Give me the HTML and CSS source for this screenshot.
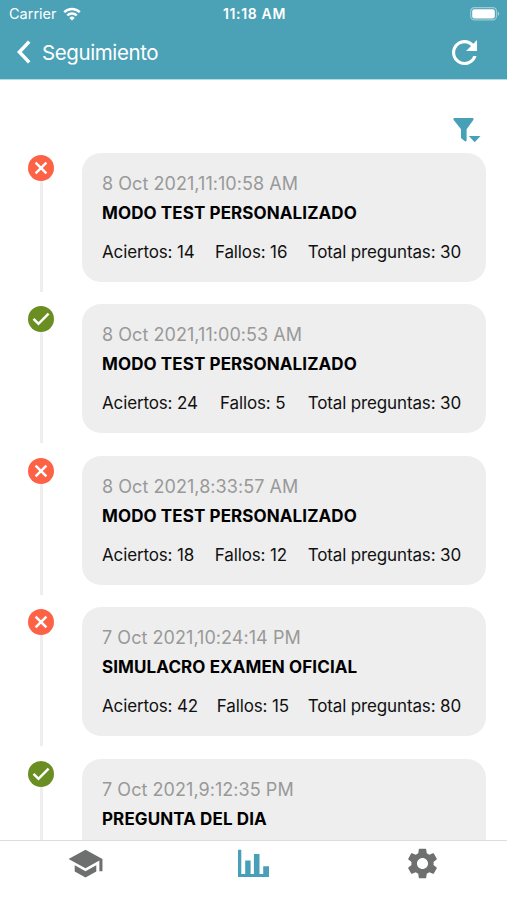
FILE: index.html
```html
<!DOCTYPE html>
<html lang="es">
  <head>
    <meta charset="UTF-8" />
    <meta name="viewport" content="width=device-width, initial-scale=1.0" />
    <title>Seguimiento</title>
    <link rel="stylesheet" href="styles.css">
  </head>
  <body>
    <svg class="symbols" aria-hidden="true">
      <symbol id="icon-fail" viewBox="0 0 26 26">
        <circle cx="13" cy="13" r="13" fill="#fd6246" />
        <path d="M7.6 7.6l10.8 10.8M18.4 7.600l-10.800 10.800" fill="none" stroke="#fff" stroke-width="2.500" />
      </symbol>
      <symbol id="icon-ok" viewBox="0 0 26 26">
        <circle cx="13" cy="13" r="13" fill="#6b8e23" />
        <path d="M5.5 12.8l5 5L20.6 7.6" fill="none" stroke="#fff" stroke-width="2.5" />
      </symbol>
    </svg>

    <header class="header">
      <div class="status-bar">
        <div class="carrier">
          <span>Carrier</span>
          <svg class="wifi" viewBox="0 0 18 14">
            <path d="M1.2 5.2a11.2 11.2 0 0 1 15.6 0" fill="none" stroke="#fff" stroke-width="2.5" />
            <path d="M4.2 8.4a6.9 6.9 0 0 1 9.6 0" fill="none" stroke="#fff" stroke-width="2.4" />
            <path d="M9 13.6L6.3 10.9a3.9 3.9 0 0 1 5.4 0z" fill="#fff" />
          </svg>
        </div>
        <span class="time">11:18 AM</span>
        <svg class="battery" viewBox="0 0 30 14">
          <rect x=".7" y=".7" width="25.8" height="12.2" rx="3.6" fill="none" stroke="#fff" stroke-opacity=".45" stroke-width="1.2" />
          <rect x="2.2" y="2.2" width="22.6" height="9.2" rx="2.2" fill="#fff" />
          <path d="M27.8 4.6v4.4c1.9-.8 1.9-3.6 0-4.4z" fill="#fff" fill-opacity=".5" />
        </svg>
      </div>
      <div class="nav-bar">
        <svg class="back" viewBox="0 0 14 24">
          <path d="M12.2 1.6L2.4 12l9.800 10.400" fill="none" stroke="#fff" stroke-width="3.5" />
        </svg>
        <h1>Seguimiento</h1>
        <svg class="refresh" viewBox="80 80 352 352">
          <path d="M256 388c-72.6 0-132-59.4-132-132s59.4-132 132-132c36.3 0 69.3 15.4 92.4 39.6L278 234h154V80l-51.7 51.7C348.4 99.8 304.4 80 256 80c-96.8 0-176 79.200-176 176s78.100 176 176 176c81 0 148.300-54.100 169.400-128h-46.600C360.100 353.600 311.700 388 256 388z" fill="#fff" />
        </svg>
      </div>
    </header>

    <main class="content">
      <div class="toolbar">
        <svg class="filter" viewBox="0 0 28 25">
          <path d="M1.2 0h18.600q1.300.700.500 2L13.600 11.300v11.200q-.6 1.600-2 .6L8 20V11.300L.7 2Q-.1.700 1.200 0z" fill="#47a0b7" />
          <path d="M15.800 18h11.700l-5.850 6.300z" fill="#47a0b7" />
        </svg>
      </div>

      <div class="timeline">
        <div class="item">
          <div class="marker"><svg><use href="#icon-fail" /></svg></div>
          <div class="card">
            <p class="date">8 Oct 2021,11:10:58 AM</p>
            <h2>MODO TEST PERSONALIZADO</h2>
            <div class="stats"><span>Aciertos: 14</span><span>Fallos: 16</span><span>Total preguntas: 30</span></div>
          </div>
        </div>
        <div class="item">
          <div class="marker"><svg><use href="#icon-ok" /></svg></div>
          <div class="card">
            <p class="date">8 Oct 2021,11:00:53 AM</p>
            <h2>MODO TEST PERSONALIZADO</h2>
            <div class="stats"><span>Aciertos: 24</span><span>Fallos: 5</span><span>Total preguntas: 30</span></div>
          </div>
        </div>
        <div class="item">
          <div class="marker"><svg><use href="#icon-fail" /></svg></div>
          <div class="card">
            <p class="date">8 Oct 2021,8:33:57 AM</p>
            <h2>MODO TEST PERSONALIZADO</h2>
            <div class="stats"><span>Aciertos: 18</span><span>Fallos: 12</span><span>Total preguntas: 30</span></div>
          </div>
        </div>
        <div class="item">
          <div class="marker"><svg><use href="#icon-fail" /></svg></div>
          <div class="card">
            <p class="date">7 Oct 2021,10:24:14 PM</p>
            <h2>SIMULACRO EXAMEN OFICIAL</h2>
            <div class="stats"><span>Aciertos: 42</span><span>Fallos: 15</span><span>Total preguntas: 80</span></div>
          </div>
        </div>
        <div class="item">
          <div class="marker"><svg><use href="#icon-ok" /></svg></div>
          <div class="card">
            <p class="date">7 Oct 2021,9:12:35 PM</p>
            <h2>PREGUNTA DEL DIA</h2>
          </div>
        </div>
      </div>
    </main>

    <nav class="tab-bar">
      <a class="tab">
        <svg viewBox="0 0 24 24"><path d="M5 13.180v4L12 21l7-3.820v-4L12 17l-7-3.820zM12 3L1 9l11 6 9-4.910V17h2V9L12 3z" /></svg>
      </a>
      <a class="tab active">
        <svg viewBox="0 0 37 37"><path d="M3 4.700h3.300v24.400h3.900V15.500h5.400v13.600h3.300V9h5.600v20.100h3.700v-7.800H34V32H3z" /></svg>
      </a>
      <a class="tab">
        <svg viewBox="0 0 24 24"><path d="M19.140 12.940c.04-.3.060-.61.060-.94 0-.32-.02-.64-.07-.94l2.030-1.580c.18-.14.230-.41.120-.61l-1.920-3.320c-.12-.22-.37-.29-.59-.22l-2.390.96c-.5-.38-1.030-.7-1.620-.94l-.36-2.540c-.04-.24-.24-.41-.48-.41h-3.840c-.24 0-.43.170-.47.410l-.36 2.540c-.59.240-1.130.570-1.620.940l-2.390-.96c-.22-.08-.47 0-.59.220L2.740 8.870c-.12.210-.08.470.120.610l2.030 1.580c-.05.300-.09.630-.09.940s.020.640.070.940l-2.030 1.580c-.18.140-.23.410-.12.610l1.920 3.320c.120.220.370.290.590.220l2.390-.96c.500.380 1.030.700 1.620.940l.360 2.540c.050.240.240.410.480.410h3.840c.240 0 .440-.17.470-.41l.360-2.540c.590-.24 1.130-.56 1.620-.94l2.390.960c.220.080.470 0 .590-.22l1.920-3.320c.120-.22.070-.47-.12-.61l-2.010-1.580zM12 15.600c-1.980 0-3.600-1.620-3.600-3.600s1.620-3.600 3.600-3.600 3.600 1.620 3.600 3.600-1.620 3.600-3.600 3.600z" /></svg>
      </a>
    </nav>
  </body>
</html>
```
FILE: styles.css
```css
* {
  box-sizing: border-box;
}
body {
  margin: 0;
  height: 900px;
  display: flex;
  flex-direction: column;
  overflow: hidden;
  background-color: #fff;
  font-family: Inter, 'Liberation Sans', sans-serif;
}
h1,
h2,
p {
  margin: 0;
}
svg {
  display: block;
}
.symbols {
  display: none;
}
.header {
  flex: none;
  height: 80px;
  background-color: #4ba1b6;
  border-bottom: 1px solid #b5dce5;
  color: #fff;
}
.status-bar {
  height: 27px;
  display: grid;
  grid-template-columns: 1fr auto 1fr;
  align-items: center;
  padding: 0 7px 0 9px;
  font-size: 14.5px;
}
.carrier {
  display: flex;
  align-items: center;
  gap: 6px;
}
.wifi {
  width: 18px;
  height: 14px;
}
.time {
  font-size: 14px;
  font-weight: 600;
  letter-spacing: 0.65px;
}
.battery {
  width: 30px;
  height: 14px;
  justify-self: end;
}
.nav-bar {
  height: 50px;
  display: flex;
  align-items: center;
  padding: 0 30px 0 17px;
}
.back {
  width: 14px;
  height: 24px;
}
.nav-bar h1 {
  flex: 1;
  margin-left: 11px;
  font-size: 20.5px;
  font-weight: 400;
  letter-spacing: -0.4px;
}
.refresh {
  width: 25px;
  height: 25px;
}
.content {
  flex: 1;
  min-height: 0;
  overflow: hidden;
  padding: 0 21px 0 28px;
}
.toolbar {
  height: 73px;
  display: flex;
  justify-content: flex-end;
  padding: 38px 5px 0 0;
}
.filter {
  width: 28px;
  height: 25px;
}
.item {
  display: flex;
  gap: 28px;
  height: 151.4px;
}
.marker {
  width: 26px;
  padding-top: 2px;
  display: flex;
  flex-direction: column;
  align-items: center;
}
.marker svg {
  flex: none;
  width: 26px;
  height: 26px;
}
.marker::after {
  content: '';
  width: 3px;
  height: 111px;
  background-color: #eee;
}
.card {
  flex: 1;
  height: 129px;
  padding: 20px 25px 0 20px;
  border-radius: 19px;
  background-color: #eee;
  white-space: nowrap;
}
.date {
  line-height: 22px;
  font-size: 18px;
  letter-spacing: 0.05px;
  color: #999;
}
.card h2 {
  margin-top: 7px;
  line-height: 22px;
  font-size: 17px;
  font-weight: 700;
  letter-spacing: 0.1px;
  color: #000;
}
.stats {
  display: flex;
  justify-content: space-between;
  margin-top: 17px;
  line-height: 22px;
  font-size: 17px;
  letter-spacing: -0.14px;
  color: #111;
}
.tab-bar {
  flex: none;
  height: 60px;
  display: grid;
  grid-template-columns: repeat(3, 1fr);
  justify-items: center;
  padding-top: 4px;
  border-top: 1px solid #ddd;
  background-color: #fff;
}
.tab {
  color: #6e706f;
}
.tab:first-child {
  padding-left: 2px;
}
.tab svg {
  width: 37px;
  height: 37px;
  fill: currentColor;
}
.tab.active {
  color: #47a0b7;
}
```
